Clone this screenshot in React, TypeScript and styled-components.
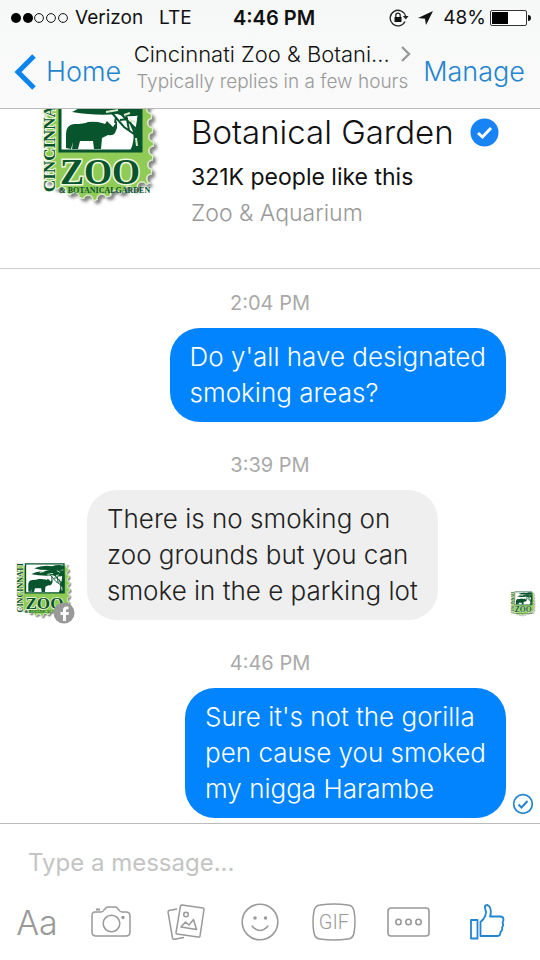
import React, { useId } from "react";
import styled, { createGlobalStyle } from "styled-components";

const GlobalStyle = createGlobalStyle`
  * { box-sizing: border-box; }
  body { margin: 0; background: #fff; }
  body, button, input { font-family: Inter, Roboto, "Liberation Sans", sans-serif; }
  button { border: 0; padding: 0; background: none; cursor: pointer; }
  svg { display: block; flex: none; }
`;

const Screen = styled.div`
  display: flex;
  flex-direction: column;
  min-height: 100vh;
  background: #fff;
  color: #111;
`;

const TopBar = styled.header`
  background: linear-gradient(#f6f8f7, #fafafa);
  border-bottom: 1px solid #b9bcbb;
`;

const StatusBar = styled.div`
  display: grid;
  grid-template-columns: 1fr auto 1fr;
  align-items: center;
  height: 36px;
  padding: 0 9px 0 11px;
  font-size: 19px;
  line-height: 24px;
`;

const StatusGroup = styled.div<{ $end?: boolean }>`
  display: flex;
  align-items: center;
  justify-content: ${(p) => (p.$end ? "flex-end" : "flex-start")};
  gap: ${(p) => (p.$end ? "4px" : "7px")};
`;

const Network = styled.span`
  margin-left: 9px;
`;

const Clock = styled.time`
  font-size: 20px;
  font-weight: 600;
  padding-left: 6px;
`;

const NavBar = styled.nav`
  display: flex;
  align-items: center;
  justify-content: space-between;
  height: 72px;
  padding: 0 15px 0 14px;
`;

const NavButton = styled.button`
  display: flex;
  align-items: center;
  gap: 10px;
  color: #2384d0;
  font-size: 27px;
  font-weight: 350;
  line-height: 36px;
`;

const TitleBlock = styled.button`
  display: flex;
  flex-direction: column;
  align-items: center;
  padding-bottom: 8px;
`;

const TitleLine = styled.span`
  display: flex;
  align-items: center;
  gap: 11px;
  color: #111;
  font-size: 22px;
  font-weight: 350;
  line-height: 28px;
`;

const Subtitle = styled.span`
  color: #999;
  font-size: 19px;
  font-weight: 300;
  line-height: 28px;
`;

const Profile = styled.section`
  display: flex;
  gap: 31px;
  height: 160px;
  padding-left: 38px;
  border-bottom: 1px solid #ccc;
`;

const ProfileText = styled.div`
  display: flex;
  flex-direction: column;
  padding-top: 3px;
`;

const ProfileName = styled.h1`
  display: flex;
  align-items: center;
  gap: 16px;
  margin: 0;
  font-size: 33px;
  font-weight: 300;
  line-height: 40px;
`;

const Likes = styled.p`
  margin: 7px 0 0;
  font-size: 23px;
  line-height: 36px;
`;

const Category = styled.p`
  margin: 0;
  color: #999;
  font-size: 23px;
  font-weight: 350;
  line-height: 36px;
`;

const Thread = styled.main`
  display: flex;
  flex: 1;
  flex-direction: column;
  padding: 9px 0 5px;
`;

const Stamp = styled.time`
  display: block;
  height: 50px;
  color: #a9a9a9;
  font-size: 20px;
  line-height: 50px;
  text-align: center;
`;

const MessageRow = styled.div<{ $mine?: boolean }>`
  display: flex;
  align-items: flex-end;
  justify-content: ${(p) => (p.$mine ? "flex-end" : "flex-start")};
  padding-left: 15px;
  margin-bottom: 18px;
  &:last-child { margin-bottom: 0; }
`;

const Bubble = styled.p<{ $mine?: boolean }>`
  margin: 0;
  padding: 11px 20px;
  border-radius: 30px;
  background: ${(p) => (p.$mine ? "#0284ff" : "#efefef")};
  color: ${(p) => (p.$mine ? "#fff" : "#222")};
  font-size: 26px;
  font-weight: 350;
  line-height: 36px;
  white-space: pre-line;
`;

const Receipt = styled.div`
  display: flex;
  flex: none;
  justify-content: center;
  width: 34px;
  padding-bottom: 3px;
  margin-left: auto;
`;

const SentReceipt = styled(Receipt)`
  margin-left: 0;
`;

const Avatar = styled.div`
  position: relative;
  flex: none;
  width: 58px;
  margin-right: 14px;
`;

const AvatarBadge = styled.div`
  position: absolute;
  right: -2px;
  bottom: -4px;
`;

const Composer = styled.footer`
  border-top: 1px solid #bbb;
`;

const MessageInput = styled.input`
  display: block;
  width: 100%;
  height: 76px;
  padding: 0 28px;
  border: 0;
  outline: 0;
  background: transparent;
  color: #222;
  font-size: 24px;
  &::placeholder { color: #c4c4c4; opacity: 1; }
`;

const Tools = styled.div`
  display: flex;
  justify-content: space-between;
  padding: 0 27px 16px 15px;
`;

const Tool = styled.button<{ $wide?: boolean }>`
  display: flex;
  align-items: center;
  justify-content: center;
  width: ${(p) => (p.$wide ? "52px" : "44px")};
  height: 44px;
  color: #999;
  font-size: 34px;
  font-weight: 300;
`;

const STAMP_EDGE = "M5 4H112L116 60L113 97L98 103L56 115L36 111L7 98L4 50Z";

function ZooLogo({ width, height, top = 0 }: { width: number; height: number; top?: number }) {
  const id = useId();
  return (
    <svg width={width} height={height} viewBox={`0 ${top} 122 ${122 - top}`} role="img" aria-label="Cincinnati Zoo">
      <defs>
        <mask id={`${id}-edge`}>
          <path d={STAMP_EDGE} fill="#fff" />
          <path d={STAMP_EDGE} fill="none" stroke="#000" strokeWidth="8" strokeDasharray="0 14" strokeLinecap="round" />
        </mask>
        <filter id={`${id}-shadow`} x="-10%" y="-10%" width="125%" height="125%">
          <feDropShadow dx="3" dy="3" stdDeviation="1.6" floodColor="#333" floodOpacity=".6" />
        </filter>
      </defs>
      <g filter={`url(#${id}-shadow)`}>
        <g mask={`url(#${id}-edge)`}>
          <path d={STAMP_EDGE} fill="#8fcb57" stroke="#e6f1d6" strokeWidth="2" />
          <path d={STAMP_EDGE} fill="none" stroke="#d9ebc2" strokeWidth="11" strokeDasharray="0 14" strokeLinecap="round" />
        </g>
      </g>
      <path d="M22 4H103V65H22Z" fill="#fff" stroke="#07542d" strokeWidth="3" />
      <g fill="#07542d">
        <path d="M28 62V48Q28 39 36 38Q46 38 50 36Q58 35 64 37L67 38L69 35L72 38L75 41L79 35L79 42L77 47Q75 50 70 49L64 52L63 63H56L55 55H42L40 63H34L35 56L33 63Z" />
        <path d="M34 26Q49 17 59 21Q72 14 103 18V29Q89 32 79 28Q59 30 34 26Z" />
        <path d="M40 13Q61 5 78 9Q91 4 103 8V16Q83 19 69 17Q52 17 40 13Z" />
        <path d="M92 65Q97 55 95 46L98 40L100 27H104V65Z" />
      </g>
      <path d="M74 27L86 41L96 48M82 27L98 43M91 44L88 28M98 50L92 36M100 41L101 27M82 34L90 33M78 31L77 37" fill="none" stroke="#07542d" strokeWidth="2" />
      <path d="M52 22L61 20M68 26L80 24M86 29L92 27M88 18L95 22M91 34L97 36M98 52L99 60" fill="none" stroke="#d7ebc7" strokeWidth="2" />
      <g fill="#07542d" fontFamily="Liberation Serif, serif" fontWeight="700">
        <text x="22" y="98" fontSize="36" stroke="#eef7df" strokeWidth="3" paintOrder="stroke">ZOO</text>
        <text x="21" y="107" fontSize="8">&amp; BOTANICALGARDEN</text>
        <text transform="translate(17 106) rotate(-90)" fontSize="17" stroke="#eef7df" strokeWidth="2" paintOrder="stroke">CINCINNATI</text>
      </g>
    </svg>
  );
}

const SignalDots = () => (
  <svg width="57" height="12" viewBox="0 0 57 12" aria-hidden="true">
    {[5, 17, 28, 40, 52].map((x, i) => (
      <circle key={x} cx={x} cy="6" r={i < 2 ? 5 : 4.4} fill={i < 2 ? "#000" : "none"} stroke="#111" strokeWidth={i < 2 ? 0 : 1} />
    ))}
  </svg>
);

const RotationLock = () => (
  <svg width="20" height="18" viewBox="0 0 20 18" fill="none" stroke="#222" aria-hidden="true">
    <path d="M16 12.5A7.8 7.8 0 1 1 16.6 7.5" strokeWidth="1.3" />
    <path d="M13.8 7H19.6L16.8 10.6Z" fill="#222" stroke="none" />
    <rect x="5.5" y="8" width="7" height="5" fill="#111" stroke="none" />
    <path d="M6.8 8V6.3a2.2 2.2 0 0 1 4.4 0V8" strokeWidth="1.3" />
  </svg>
);

const LocationArrow = () => (
  <svg width="26" height="16" viewBox="0 0 26 16" aria-hidden="true">
    <path d="M20 1L13 15L12 8.7L5 8Z" fill="#111" />
  </svg>
);

const Battery = () => (
  <svg width="41" height="16" viewBox="0 0 41 16" aria-label="Battery">
    <rect x=".5" y=".5" width="36" height="15" rx="1.5" fill="#fff" stroke="#333" />
    <path d="M2 2H18V14H2Z" fill="#000" />
    <path d="M38 5Q41 5 41 8T38 11Z" fill="#111" />
  </svg>
);

const Verified = () => (
  <svg width="29" height="29" viewBox="0 0 29 29" aria-label="Verified">
    <circle cx="14.5" cy="14.5" r="14" fill="#1783f5" />
    <path d="M8 15L12.5 19L21 10" fill="none" stroke="#fff" strokeWidth="3" />
  </svg>
);

const FacebookBadge = () => (
  <svg width="22" height="22" viewBox="0 0 22 22" aria-label="Facebook">
    <circle cx="11" cy="11" r="10.5" fill="#999" />
    <path d="M15.5 4.5H13.5Q10 4.5 10 8V10H7.5V13H10V19H13V13H15.5L16 10H13V8.5Q13 7.3 14.2 7.3H15.5Z" fill="#fff" />
  </svg>
);

const SentCheck = () => (
  <svg width="22" height="22" viewBox="0 0 22 22" fill="none" stroke="#2384d0" strokeWidth="1.7" aria-label="Sent">
    <circle cx="11" cy="11" r="9.3" />
    <path d="M6.5 11.5L9.5 14.5L15.5 8" strokeWidth="2" />
  </svg>
);

const CameraIcon = () => (
  <svg width="40" height="34" viewBox="0 0 40 34" fill="none" stroke="currentColor" strokeWidth="1.5" aria-hidden="true">
    <path d="M4 7H10Q12 7 13 5L14 4Q15 2 17 2H24Q26 2 27 4L28 5Q29 7 31 7H35Q39 7 39 11V27Q39 31 35 31H5Q1 31 1 27V11Q1 7 4 7Z" />
    <circle cx="20.5" cy="18.5" r="8.3" />
    <circle cx="32" cy="12.5" r="1" fill="currentColor" />
    <path d="M5 4.5H9" strokeWidth="2" />
  </svg>
);

const PhotosIcon = () => (
  <svg width="38" height="38" viewBox="0 0 38 38" fill="none" stroke="currentColor" strokeWidth="1.5" aria-hidden="true">
    <path d="M15 2L36 5Q37 5 37 6.5L33 33Q33 34.5 31 34L10 31Q9 31 9 29.5L13.5 3Q13.5 2 15 2Z" />
    <path d="M10 6L2 7.5Q1 8 1 9L5.5 35Q6 36.5 7.5 36.2L17 34.5" />
    <circle cx="19" cy="11.5" r="2.3" />
    <path d="M14 24L18.5 19L22 22L26.5 16.5L29.5 26.5Z" strokeLinejoin="round" />
  </svg>
);

const SmileIcon = () => (
  <svg width="38" height="38" viewBox="0 0 38 38" fill="none" stroke="currentColor" strokeWidth="1.6" aria-hidden="true">
    <circle cx="19" cy="19" r="17.8" />
    <path d="M11 23Q19 32 27 23" strokeLinecap="round" />
    <circle cx="14" cy="15" r="1" fill="currentColor" />
    <circle cx="24.5" cy="15" r="1" fill="currentColor" />
  </svg>
);

const GifIcon = () => (
  <svg width="44" height="38" viewBox="0 0 44 38" fill="none" stroke="currentColor" strokeWidth="1.5" aria-hidden="true">
    <path d="M8 2Q22 0 36 2Q41 2.5 42 8Q44 19 42 30Q41 35.5 36 36Q22 38 8 36Q3 35.5 2 30Q0 19 2 8Q3 2.5 8 2Z" />
    <text x="22" y="26" textAnchor="middle" fill="currentColor" stroke="none" fontSize="20" fontFamily="Roboto, sans-serif">GIF</text>
  </svg>
);

const MoreIcon = () => (
  <svg width="43" height="30" viewBox="0 0 43 30" fill="none" stroke="currentColor" strokeWidth="1.6" aria-hidden="true">
    <rect x="1" y="1" width="41" height="28" rx="3" />
    {[11.5, 21.5, 31.5].map((x) => <circle key={x} cx={x} cy="15" r="2.7" />)}
  </svg>
);

const ThumbIcon = () => (
  <svg width="36" height="36" viewBox="0 0 36 36" fill="none" stroke="#2384d0" strokeWidth="1.8" strokeLinejoin="round" aria-hidden="true">
    <path d="M2 16H8.5V34.5H2Z" />
    <path d="M11.5 32V18L14.5 15Q17 12 17 8L15.8 3Q16 1 18.5 1Q21.5 2.5 21.8 7Q22 10 21 12.5H31Q34.5 12.5 34.5 15.5Q34.5 17 33.5 18.5Q35 21 33 23.5Q34 26 31.5 28Q31.5 32 28.5 32Z" />
  </svg>
);

export default function App() {
  return (
    <Screen>
      <GlobalStyle />
      <TopBar>
        <StatusBar>
          <StatusGroup>
            <SignalDots />
            <span>Verizon</span>
            <Network>LTE</Network>
          </StatusGroup>
          <Clock>4:46 PM</Clock>
          <StatusGroup $end>
            <RotationLock />
            <LocationArrow />
            <span>48%</span>
            <Battery />
          </StatusGroup>
        </StatusBar>
        <NavBar>
          <NavButton>
            <svg width="22" height="36" viewBox="0 0 22 36" fill="none" stroke="#0a84f0" strokeWidth="5" aria-hidden="true">
              <path d="M20 2L4 18L20 34" />
            </svg>
            Home
          </NavButton>
          <TitleBlock>
            <TitleLine>
              Cincinnati Zoo &amp; Botani...
              <svg width="10" height="18" viewBox="0 0 10 18" fill="none" stroke="#999" strokeWidth="2.4" aria-hidden="true">
                <path d="M1 2L8 9L1 16" />
              </svg>
            </TitleLine>
            <Subtitle>Typically replies in a few hours</Subtitle>
          </TitleBlock>
          <NavButton>Manage</NavButton>
        </NavBar>
      </TopBar>

      <Profile>
        <ZooLogo width={122} height={99} top={23} />
        <ProfileText>
          <ProfileName>Botanical Garden <Verified /></ProfileName>
          <Likes>321K people like this</Likes>
          <Category>Zoo &amp; Aquarium</Category>
        </ProfileText>
      </Profile>

      <Thread>
        <Stamp>2:04 PM</Stamp>
        <MessageRow $mine>
          <Bubble $mine>{"Do y'all have designated\nsmoking areas?"}</Bubble>
          <SentReceipt />
        </MessageRow>
        <Stamp>3:39 PM</Stamp>
        <MessageRow>
          <Avatar>
            <ZooLogo width={58} height={58} />
            <AvatarBadge><FacebookBadge /></AvatarBadge>
          </Avatar>
          <Bubble>{"There is no smoking on\nzoo grounds but you can\nsmoke in the e parking lot"}</Bubble>
          <Receipt><ZooLogo width={26} height={26} /></Receipt>
        </MessageRow>
        <Stamp>4:46 PM</Stamp>
        <MessageRow $mine>
          <Bubble $mine>{"Sure it's not the gorilla\npen cause you smoked\nmy nigga Harambe"}</Bubble>
          <SentReceipt><SentCheck /></SentReceipt>
        </MessageRow>
      </Thread>

      <Composer>
        <MessageInput aria-label="Message" placeholder="Type a message..." />
        <Tools>
          <Tool aria-label="Text">Aa</Tool>
          <Tool aria-label="Camera"><CameraIcon /></Tool>
          <Tool aria-label="Photos"><PhotosIcon /></Tool>
          <Tool aria-label="Emoji"><SmileIcon /></Tool>
          <Tool aria-label="GIF"><GifIcon /></Tool>
          <Tool aria-label="More"><MoreIcon /></Tool>
          <Tool aria-label="Like" $wide><ThumbIcon /></Tool>
        </Tools>
      </Composer>
    </Screen>
  );
}
